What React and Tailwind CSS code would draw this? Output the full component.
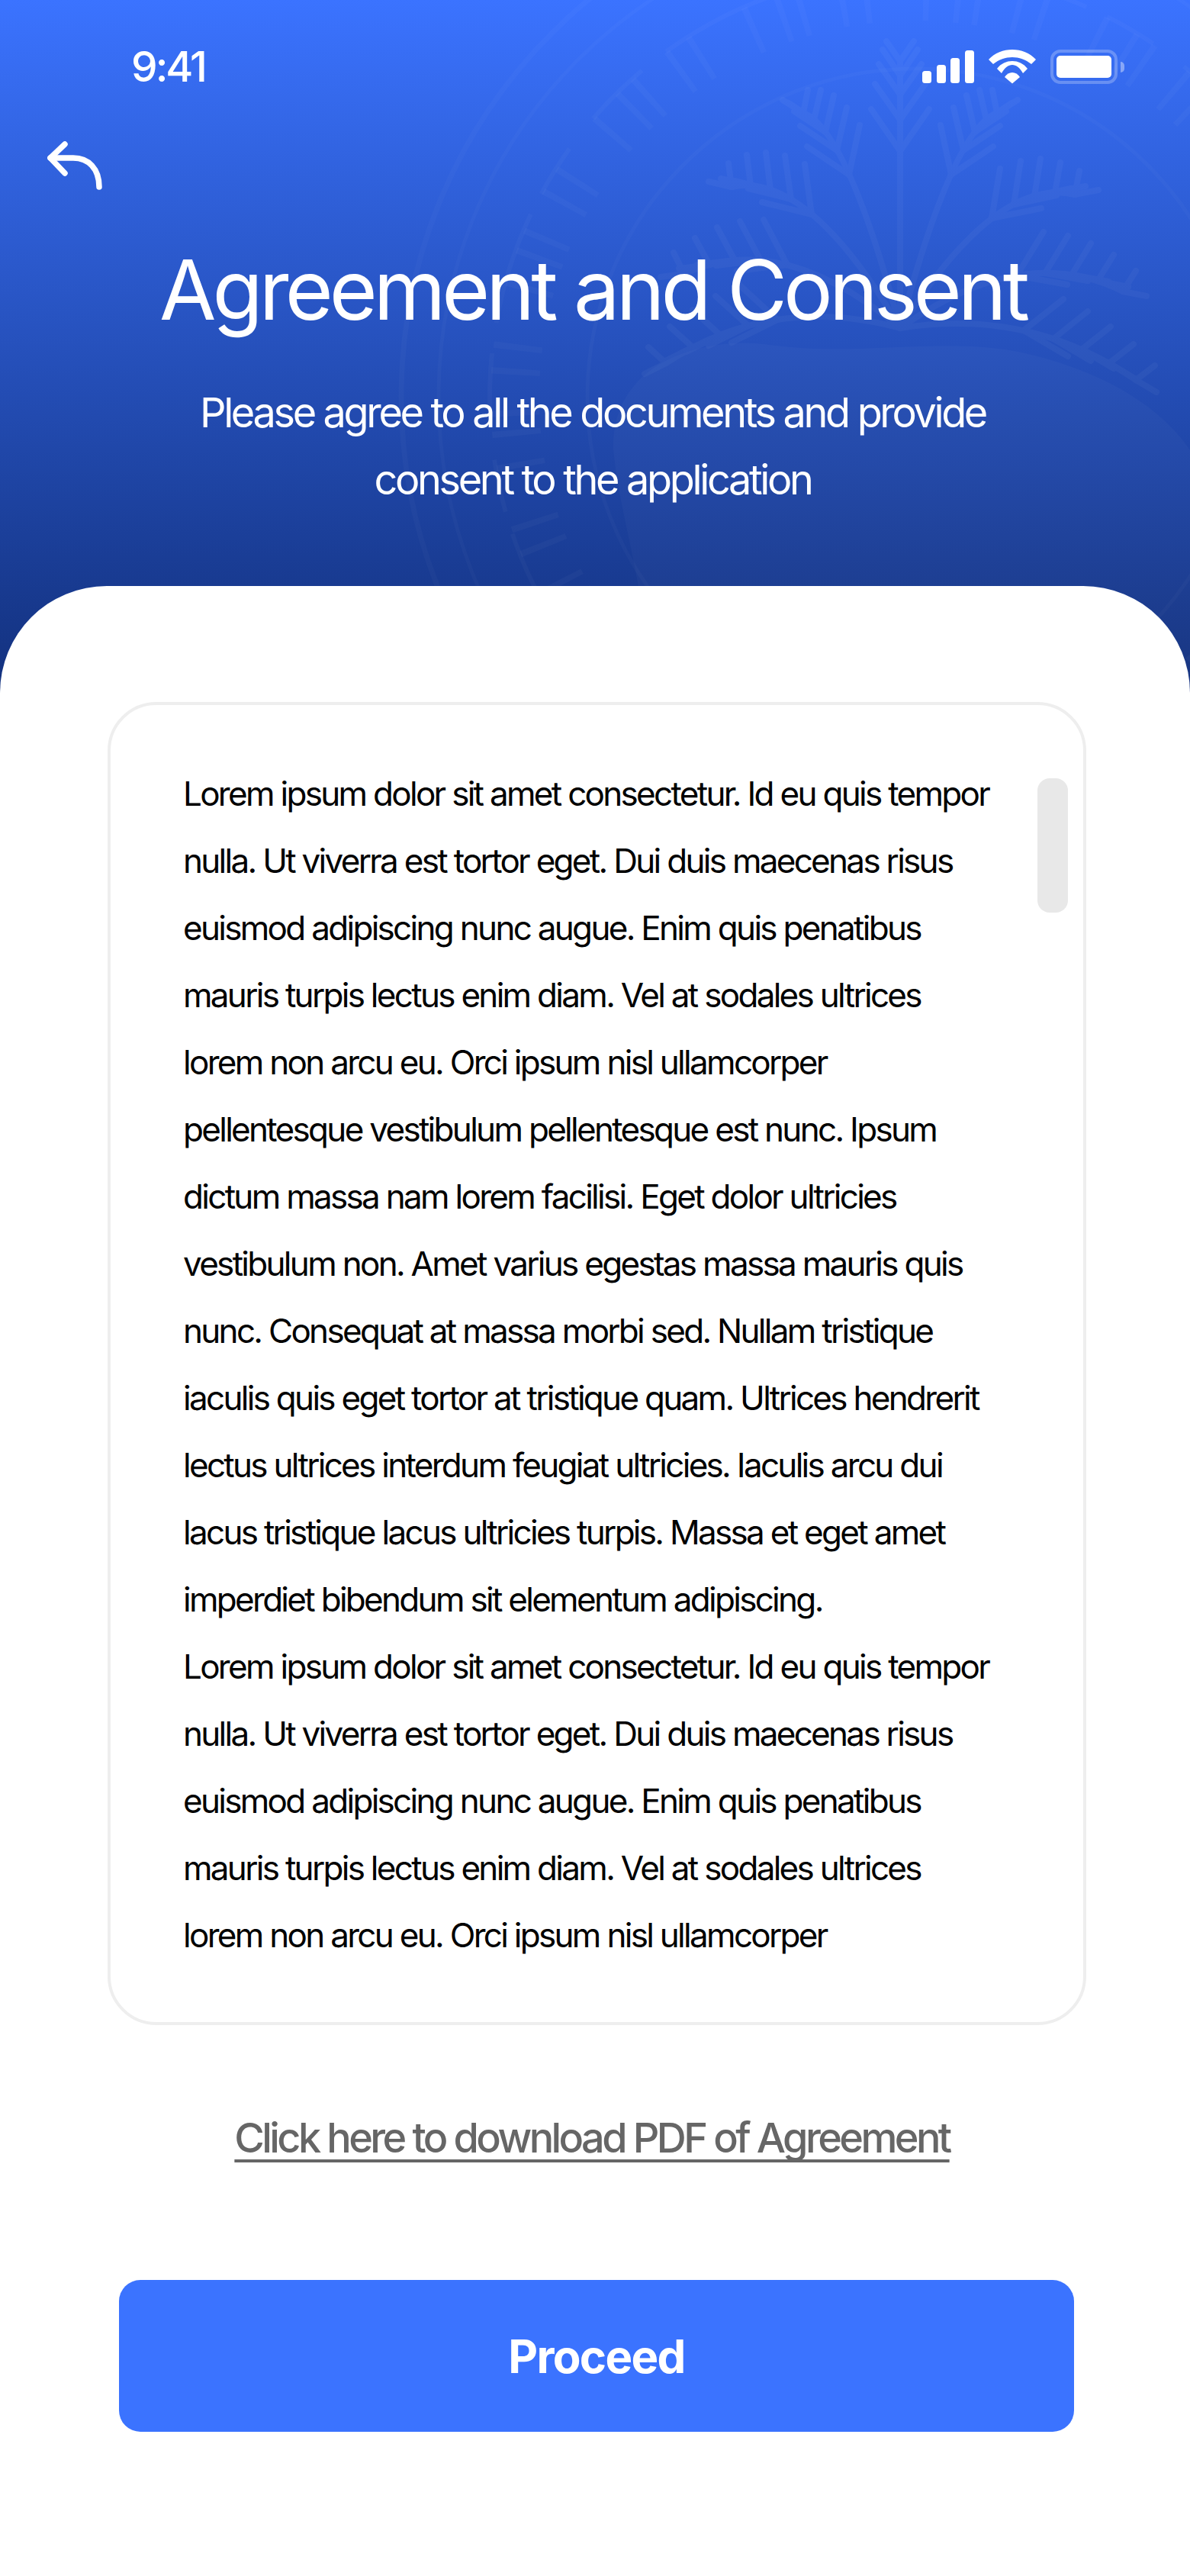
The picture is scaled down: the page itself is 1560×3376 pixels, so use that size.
import React from 'react';

const lorem = [
  'Lorem ipsum dolor sit amet consectetur. Id eu quis tempor',
  'nulla. Ut viverra est tortor eget. Dui duis maecenas risus',
  'euismod adipiscing nunc augue. Enim quis penatibus',
  'mauris turpis lectus enim diam. Vel at sodales ultrices',
  'lorem non arcu eu. Orci ipsum nisl ullamcorper',
  'pellentesque vestibulum pellentesque est nunc. Ipsum',
  'dictum massa nam lorem facilisi. Eget dolor ultricies',
  'vestibulum non. Amet varius egestas massa mauris quis',
  'nunc. Consequat at massa morbi sed. Nullam tristique',
  'iaculis quis eget tortor at tristique quam. Ultrices hendrerit',
  'lectus ultrices interdum feugiat ultricies. Iaculis arcu dui',
  'lacus tristique lacus ultricies turpis. Massa et eget amet',
  'imperdiet bibendum sit elementum adipiscing.',
  'Lorem ipsum dolor sit amet consectetur. Id eu quis tempor',
  'nulla. Ut viverra est tortor eget. Dui duis maecenas risus',
  'euismod adipiscing nunc augue. Enim quis penatibus',
  'mauris turpis lectus enim diam. Vel at sodales ultrices',
  'lorem non arcu eu. Orci ipsum nisl ullamcorper',
];

// palm fronds of the watermark: each one a curved rib with short barbs
function frondPaths() {
  const ox = 1180;
  const oy = 430;
  const out = [];
  const angles = [-172, -152, -132, -112, -90, -68, -46, -24, -4];
  angles.forEach((deg, f) => {
    const a = (deg * Math.PI) / 180;
    const len = 350 - Math.abs(f - 4) * 10;
    const droop = Math.abs(Math.cos(a)) * 90;
    const ex = ox + Math.cos(a) * len;
    const ey = oy + Math.sin(a) * len + droop;
    const cx = ox + Math.cos(a) * len * 0.55;
    const cy = oy + Math.sin(a) * len * 0.8 - 10;
    out.push(`M${ox} ${oy} Q${cx.toFixed(0)} ${cy.toFixed(0)} ${ex.toFixed(0)} ${ey.toFixed(0)}`);
    for (let t = 0.5; t < 1.01; t += 0.125) {
      const px = (1 - t) * (1 - t) * ox + 2 * (1 - t) * t * cx + t * t * ex;
      const py = (1 - t) * (1 - t) * oy + 2 * (1 - t) * t * cy + t * t * ey;
      const l = 70 * (1.25 - t) + 14;
      [-0.6, 0.6].forEach((s) => {
        const b = a + s;
        out.push(`M${px.toFixed(0)} ${py.toFixed(0)} L${(px + Math.cos(b) * l).toFixed(0)} ${(py + Math.sin(b) * l).toFixed(0)}`);
      });
    }
  });
  return out;
}

function Emblem() {
  return (
    <svg className="absolute left-0 top-0 w-[1560px] h-[920px]" viewBox="0 0 1560 920" fill="none" stroke="#ffffff">
      <circle cx="1200" cy="520" r="674" strokeWidth="7" strokeOpacity="0.025" />
      <circle cx="1200" cy="520" r="625" strokeWidth="5" strokeOpacity="0.025" />
      <circle cx="1200" cy="520" r="430" strokeWidth="5" strokeOpacity="0.025" />
      {/* lettering ring of the seal, reduced to uneven radial strokes */}
      <circle cx="1200" cy="520" r="525" strokeWidth="64" strokeOpacity="0.028" strokeDasharray="8 46 8 24 8 70 8 34 8 18" />
      <circle cx="1200" cy="520" r="558" strokeWidth="6" strokeOpacity="0.028" strokeDasharray="90 40 150 30 70 50" />
      <g opacity="0.032" strokeWidth="8" strokeLinecap="round">
        {frondPaths().map((d, i) => (
          <path key={i} d={d} />
        ))}
      </g>
      <path d="M804 590 C800 470 930 440 1010 452 C1120 468 1240 440 1340 462 C1440 484 1520 530 1560 590 L1560 920 L840 920 C860 800 815 700 804 590 Z" fill="#ffffff" fillOpacity="0.022" stroke="none" />
    </svg>
  );
}

function StatusIcons() {
  return (
    <div className="flex items-center gap-[19px]">
      <svg width="68" height="43" viewBox="0 0 68 43" fill="#ffffff">
        <rect x="0" y="27" width="12" height="16" rx="3.5" />
        <rect x="19" y="19" width="12" height="24" rx="3.5" />
        <rect x="37" y="10" width="12" height="33" rx="3.5" />
        <rect x="56" y="0" width="12" height="43" rx="3.5" />
      </svg>
      <svg width="62" height="45" viewBox="0 0 62 45" fill="#ffffff">
        <path d="M0 13 C16 -4.3 46 -4.3 62 13 L56 19 C41 7 21 7 6 19 Z" />
        <path d="M11 25 C21 11.7 41 11.7 51 25 L45 31 C37 16.3 25 16.3 17 31 Z" />
        <path d="M21 36 C26 28 36 28 41 36 L31 44.5 Z" />
      </svg>
      <div className="flex items-center gap-[4px]">
        <div className="w-[88px] h-[45px] rounded-[13px] border-[4px] border-white/25 p-[4px]">
          <div className="w-full h-full rounded-[5px] bg-white" />
        </div>
        <div className="w-[5px] h-[14px] rounded-r-full bg-white/40" />
      </div>
    </div>
  );
}

export default function App() {
  return (
    <div className="relative w-[1560px] h-[3376px] bg-white overflow-hidden" style={{ fontFamily: 'Inter, sans-serif' }}>
      <header className="relative h-[920px] bg-gradient-to-b from-[#3b73ff] to-[#12307c] overflow-hidden">
        <Emblem />
        <div className="relative flex items-center justify-between pl-[172px] pr-[86px] pt-[65px]">
          <span className="text-[55px] leading-[45px] font-medium tracking-[-3px] text-white">9:41</span>
          <StatusIcons />
        </div>
        <div className="relative pl-[62px] pt-[75px]">
          <svg width="72" height="64" viewBox="0 0 72 64" fill="none" stroke="#ffffff" strokeWidth="7.5" strokeLinecap="round" strokeLinejoin="round">
            <path d="M23 4 L4 22 L23 42" />
            <path d="M4 22 H34 C54 22 68 36 68 60" />
          </svg>
        </div>
        <h1 className="relative mt-[66px] pr-[6px] text-center text-[108px] leading-[130px] font-normal tracking-[-4.95px] text-white">Agreement and Consent</h1>
        <p className="relative mt-[52px] pr-[6px] text-center text-[54px] leading-[88px] tracking-[-3.35px] text-white">
          Please agree to all the documents and provide<br />consent to the application
        </p>
      </header>

      <main className="relative -mt-[152px] h-[2608px] rounded-t-[140px] bg-white pt-[152px]">
        <section className="relative ml-[141px] mr-[136px] h-[1734px] rounded-[64px] border-[4px] border-[#eeeeee] pl-[95px] pt-[72px]">
          {lorem.map((line, i) => (
            <div key={i} className="text-[44px] leading-[88px] tracking-[-2.7px] text-black whitespace-nowrap">{line}</div>
          ))}
          <div className="absolute right-[20px] top-[96px] w-[40px] h-[176px] rounded-[16px] bg-[#e8e8e8]" />
        </section>
        <div className="mt-[114px] pr-[8px] text-center">
          <a className="text-[54px] leading-[68px] font-medium tracking-[-3.6px] text-[#666666] underline decoration-[4px] underline-offset-[9px] [text-decoration-skip-ink:none]">Click here to download PDF of Agreement</a>
        </div>
        <button className="block ml-[156px] mt-[152px] w-[1252px] h-[199px] rounded-[28px] bg-[#3b73ff] text-[60px] font-bold tracking-[-1.7px] text-white">Proceed</button>
      </main>
    </div>
  );
}
